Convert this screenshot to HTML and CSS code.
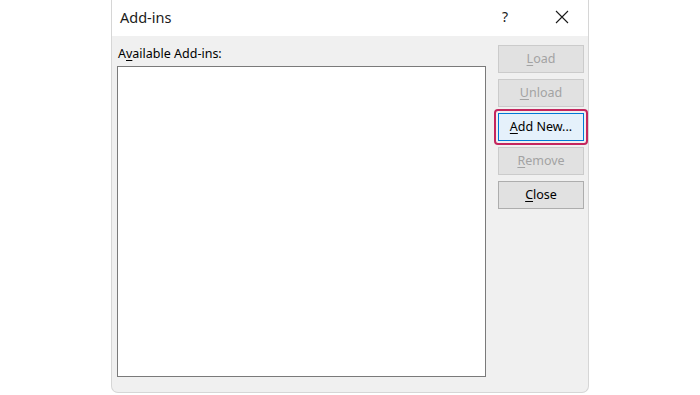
FILE: index.html
```html
<!DOCTYPE html>
<html>
<head>
<meta charset="utf-8">
<link rel="stylesheet" href="styles.css">
</head>
<body>
<div class="dialog">
  <div class="titlebar">
    <div class="title">Add-ins</div>
    <div class="help">?</div>
    <div class="close">
      <svg width="14" height="14" viewBox="0 0 14 14"><path d="M1 1L13 13M13 1L1 13" stroke="#1a1a1a" stroke-width="1.1" fill="none"/></svg>
    </div>
  </div>
  <div class="content">
    <div class="left">
      <div class="label">A<u>v</u>ailable Add-ins:</div>
      <div class="listbox"></div>
    </div>
    <div class="buttons">
      <div class="btn disabled"><u>L</u>oad</div>
      <div class="btn disabled"><u>U</u>nload</div>
      <div class="focusring"><div class="btn primary"><u>A</u>dd New...</div></div>
      <div class="btn disabled"><u>R</u>emove</div>
      <div class="btn normal"><u>C</u>lose</div>
    </div>
  </div>
</div>
</body>
</html>
```
FILE: styles.css
```css
html, body {
  margin: 0;
  padding: 0;
  background: #ffffff;
}
body {
  width: 700px;
  height: 395px;
  overflow: hidden;
  font-family: "Noto Sans", "Open Sans", sans-serif;
  color: #000;
}
.dialog {
  margin-left: 111px;
  width: 476px;
  height: 393px;
  border: 1px solid #d6d6d6;
  border-top: none;
  border-radius: 0 0 7px 7px;
  background: #f0f0f0;
  display: flex;
  flex-direction: column;
  overflow: hidden;
  box-sizing: border-box;
  width: 478px;
}
.titlebar {
  height: 36px;
  flex: none;
  background: #ffffff;
  display: flex;
  align-items: center;
}
.title {
  flex: 1;
  padding-left: 8px;
  font-size: 14.5px;
  color: #1a1a1a;
  padding-bottom: 3px;
}
.help {
  width: 26px;
  font-size: 14px;
  text-align: center;
  color: #1a1a1a;
  padding-bottom: 3px;
  margin-right: 22px;
}
.close {
  width: 44px;
  display: flex;
  justify-content: center;
  padding-bottom: 3px;
  margin-right: 4px;
}
.content {
  flex: 1;
  display: flex;
  padding: 10px 4px 15px 5px;
}
.left {
  width: 369px;
  display: flex;
  flex-direction: column;
}
.label {
  font-size: 12.5px;
  padding-left: 1px;
  height: 20px;
  line-height: 16px;
  color: #000;
}
.label u, .btn u {
  text-decoration-thickness: 1px;
  text-underline-offset: 2px;
}
.listbox {
  flex: 1;
  background: #ffffff;
  border: 1px solid #7a7a7a;
}
.buttons {
  margin-left: 12px;
  width: 86px;
  display: flex;
  flex-direction: column;
  gap: 6px;
  margin-top: -1px;
}
.btn {
  box-sizing: border-box;
  height: 28px;
  width: 86px;
  display: flex;
  align-items: center;
  justify-content: center;
  font-size: 12.5px;
  padding-bottom: 1px;
}
.disabled {
  background: #e1e1e1;
  border: 1px solid #cbcbcb;
  color: #a3a3a3;
}
.normal {
  background: #e1e1e1;
  border: 1px solid #adadad;
  color: #000;
}
.focusring {
  margin: -4px -4px;
  padding: 2px;
  border: 2px solid #c4265e;
  border-radius: 4px;
}
.primary {
  background: #e5f1fb;
  border: 1px solid #0078d7;
  color: #000;
}
```
